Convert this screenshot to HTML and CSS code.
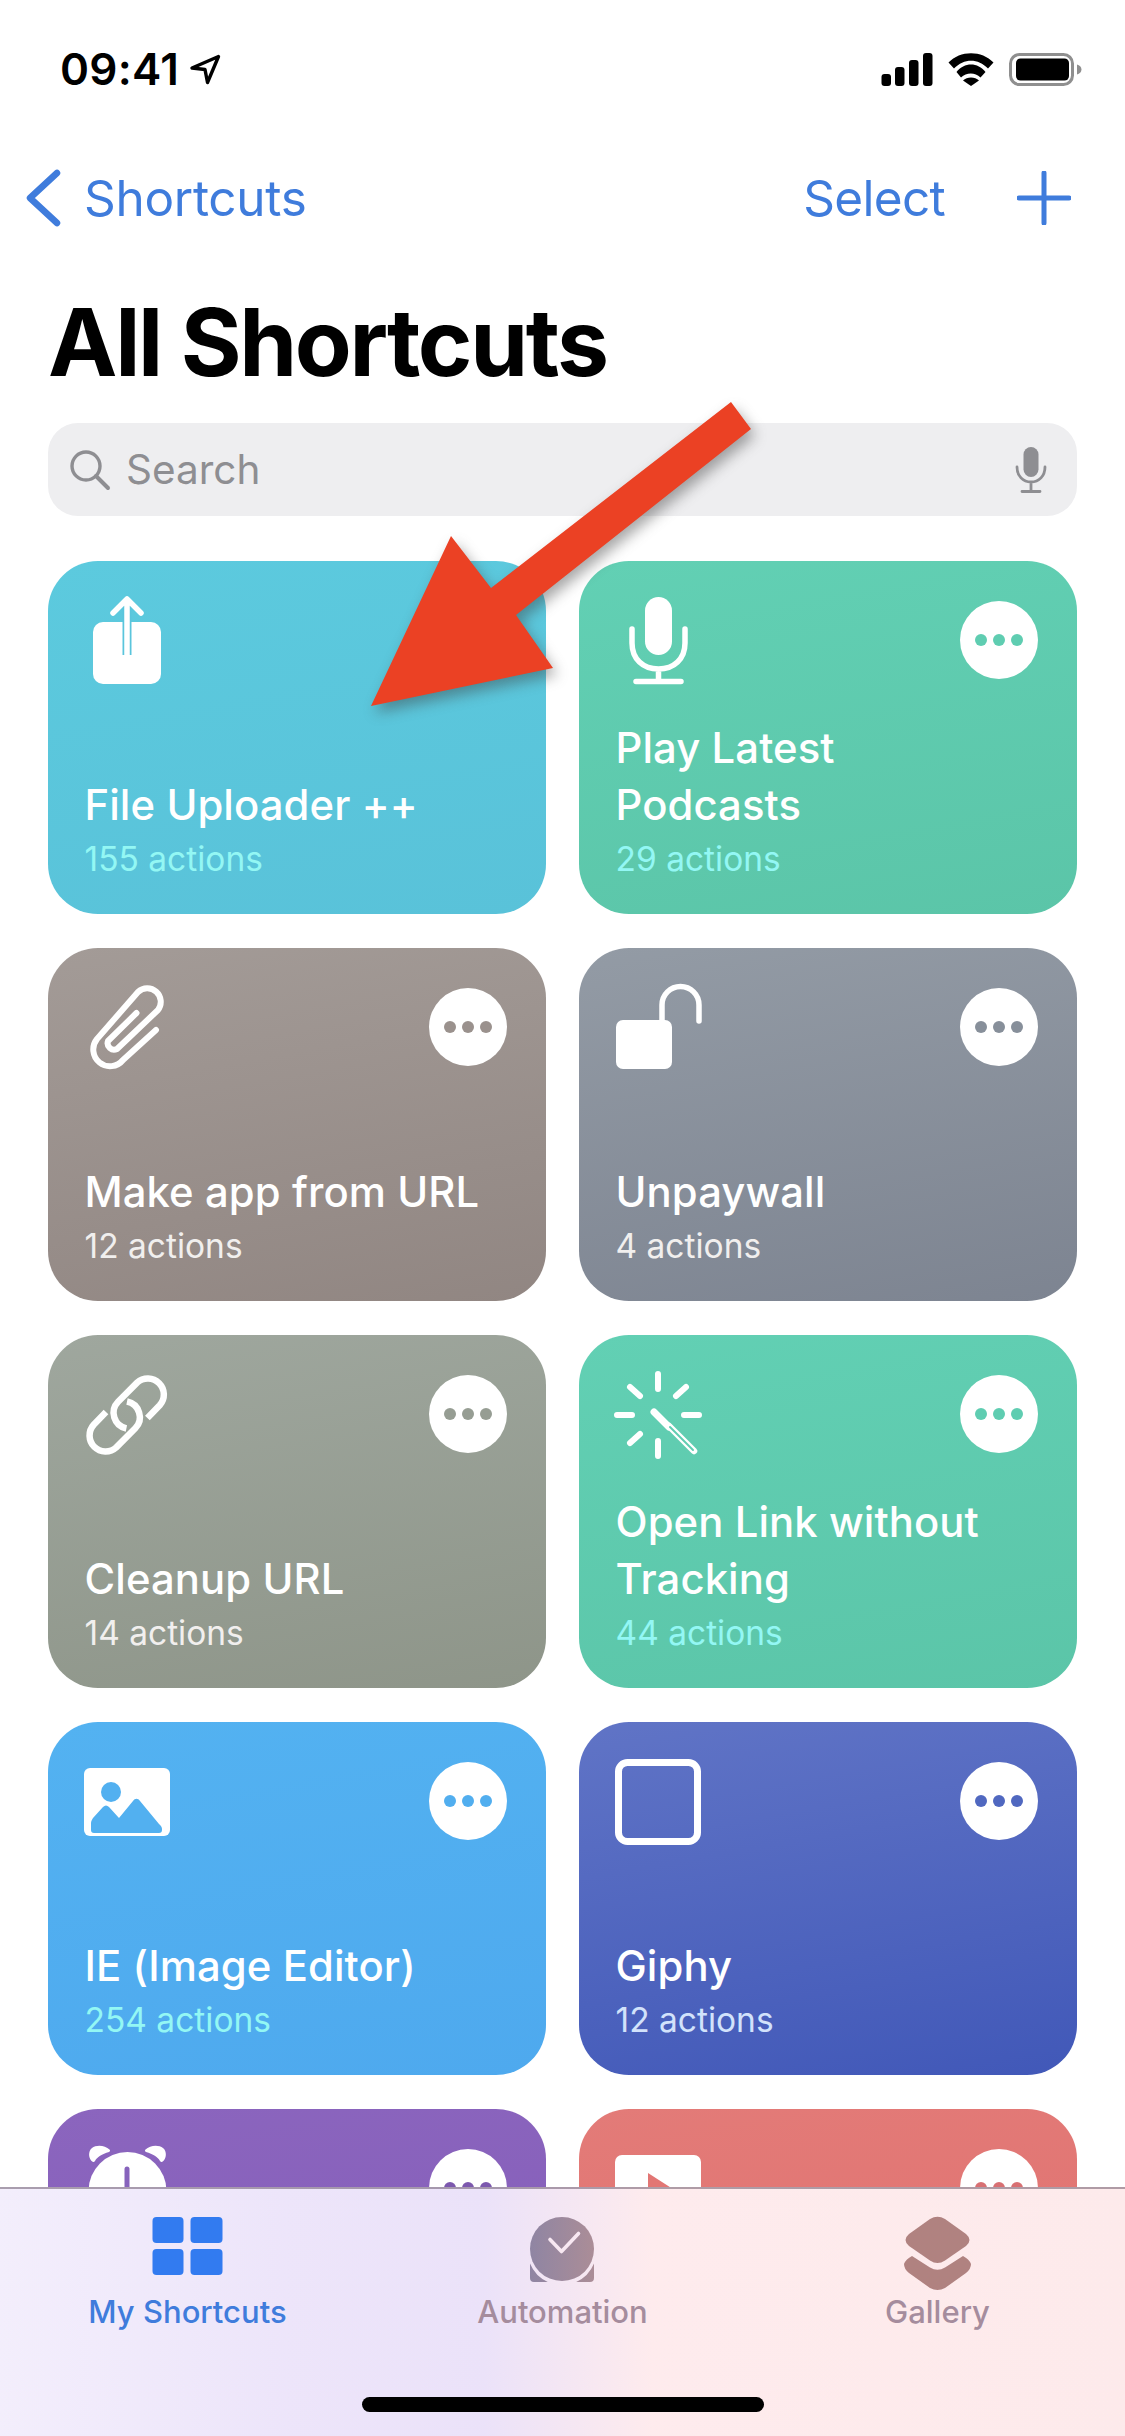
FILE: index.html
```html
<!DOCTYPE html>
<html lang="en">
<head>
<meta charset="utf-8">
<title>All Shortcuts</title>
<link rel="stylesheet" href="styles.css">
</head>
<body>
<div class="page">
  <div class="status">
    <div class="time-wrap">
      <span class="time">09:41</span>
      <svg class="loc" viewBox="0 0 32 32"><path d="M29.500 3.500 3 15l13 1.500 2.500 13z" fill="none" stroke="#000" stroke-width="3.400" stroke-linejoin="round"/></svg>
    </div>
    <div class="status-icons">
      <svg class="sig" viewBox="0 0 52 33"><rect x="0.500" y="21" width="9.500" height="12" rx="3"/><rect x="14" y="14" width="9.500" height="19" rx="3"/><rect x="28" y="7" width="9.500" height="26" rx="3"/><rect x="42" y="0" width="9.500" height="33" rx="3"/></svg>
      <svg class="wifi" viewBox="0 0 46 34"><path d="M.5 10.500C12-2 34-2 45.500 10.500L40 16.500C30 6 16 6 6 16.500z"/><path d="M8.500 20C16 10 30 10 37.500 20L32.500 25.500C27 20 18.500 20 13 25.500z"/><path d="M15 28.500C19 24.500 27 24.500 31 28.500L23 34z"/></svg>
      <svg class="batt" viewBox="0 0 73 33"><rect x="1.500" y="1.500" width="62" height="30" rx="9" fill="none" stroke="#8f8f8f" stroke-width="3"/><rect x="7" y="5.500" width="53" height="22" rx="4.500"/><path d="M68 11.500c2.500.8 4.500 2.500 4.500 5s-2 4.200-4.500 5z" fill="#8f8f8f"/></svg>
    </div>
  </div>

  <div class="nav">
    <div class="nav-back">
      <svg class="chev" viewBox="0 0 36 58"><path d="M31 4 4 29l27 25" fill="none" stroke="#3f7cdc" stroke-width="6.500" stroke-linecap="round" stroke-linejoin="round"/></svg>
      <span>Shortcuts</span>
    </div>
    <div class="nav-right">
      <span class="select">Select</span>
      <svg class="plus" viewBox="0 0 54 54"><path d="M27 2v50M2 27h50" fill="none" stroke="#3f7cdc" stroke-width="5" stroke-linecap="round"/></svg>
    </div>
  </div>

  <h1 class="title">All Shortcuts</h1>

  <div class="search">
    <svg class="search-ico" viewBox="0 0 42 42"><circle cx="17" cy="17" r="14" fill="none" stroke="#8e8e92" stroke-width="3.400"/><path d="M27 27l12 12" stroke="#8e8e92" stroke-width="4" stroke-linecap="round"/></svg>
    <span class="search-text">Search</span>
    <svg class="search-mic" viewBox="0 0 32 46"><rect x="8.500" y="0" width="15" height="30" rx="7.500" fill="#8e8e92"/><path d="M2 20c0 9 6 15 14 15s14-6 14-15M16 35v8M7 44.500h18" fill="none" stroke="#8e8e92" stroke-width="2.800" stroke-linecap="round"/></svg>
  </div>

  <div class="grid">
    <div class="card c-blue">
      <div class="card-top">
        <svg class="ico" viewBox="0 0 100 100"><rect x="8" y="31" width="68" height="62" rx="10" fill="#fff"/><path d="M42 64V10" stroke="#5ac5dc" stroke-width="9"/><path d="M42 64V10M28 22 42 8l14 14" fill="none" stroke="#fff" stroke-width="5.500" stroke-linecap="round" stroke-linejoin="round"/></svg>
      </div>
      <div class="name">File Uploader ++</div>
      <div class="sub cy">155 actions</div>
    </div>
    <div class="card c-green">
      <div class="card-top">
        <svg class="ico" viewBox="0 0 100 100"><rect x="29" y="6" width="27" height="58" rx="13.500" fill="#fff"/><path d="M16 38v14c0 16 11 26 26.500 26S69 68 69 52V38M42.500 78v12M20 90.500h45" fill="none" stroke="#fff" stroke-width="5.500" stroke-linecap="round"/></svg>
        <div class="more t-green"><i></i><i></i><i></i></div>
      </div>
      <div class="name">Play Latest<br>Podcasts</div>
      <div class="sub cy">29 actions</div>
    </div>
    <div class="card c-brown">
      <div class="card-top">
        <svg class="ico" viewBox="0 0 100 100"><path d="M71 52 38 82A15.500 15.500 0 0 1 12 61L53 14A13.500 13.500 0 0 1 73 32L32 71A6.500 6.500 0 0 1 23 63L51.500 35" fill="none" stroke="#fff" stroke-width="6" stroke-linecap="round" stroke-linejoin="round"/></svg>
        <div class="more t-brown"><i></i><i></i><i></i></div>
      </div>
      <div class="name">Make app from URL</div>
      <div class="sub">12 actions</div>
    </div>
    <div class="card c-slate">
      <div class="card-top">
        <svg class="ico" viewBox="0 0 100 100"><rect x="0" y="42" width="56" height="49" rx="7" fill="#fff"/><path d="M46 44V27a18 18 0 0 1 37 0v16" fill="none" stroke="#fff" stroke-width="5.500" stroke-linecap="round"/></svg>
        <div class="more t-slate"><i></i><i></i><i></i></div>
      </div>
      <div class="name">Unpaywall</div>
      <div class="sub">4 actions</div>
    </div>
    <div class="card c-sage">
      <div class="card-top">
        <svg class="ico" viewBox="0 0 100 100"><path d="M21 47 8.700 59.700A16 16 0 0 0 31.300 82.300L50.300 63.300A16 16 0 0 0 42 36.500M62.400 53 74.700 40.300A16 16 0 0 0 52.100 17.700L33.100 36.700A16 16 0 0 0 41.400 63.500" fill="none" stroke="#fff" stroke-width="6.500"/></svg>
        <div class="more t-sage"><i></i><i></i><i></i></div>
      </div>
      <div class="name">Cleanup URL</div>
      <div class="sub">14 actions</div>
    </div>
    <div class="card c-green">
      <div class="card-top">
        <svg class="ico" viewBox="0 0 100 100"><path d="M42 9v15M42 76v15M1 50h15M68 50h15M14 22l10 9M70 22l-10 9M14 78l10-9" fill="none" stroke="#fff" stroke-width="6" stroke-linecap="round"/><path d="M38 47 53 62" stroke="#fff" stroke-width="7" stroke-linecap="round"/><path d="M53 61 78 86" stroke="#fff" stroke-width="6.500" stroke-linecap="round"/><path d="M54 62 77 85" stroke="#5fcdb1" stroke-width="2" stroke-linecap="round"/></svg>
        <div class="more t-green"><i></i><i></i><i></i></div>
      </div>
      <div class="name">Open Link without<br>Tracking</div>
      <div class="sub cy">44 actions</div>
    </div>
    <div class="card c-sky">
      <div class="card-top">
        <svg class="ico" viewBox="0 0 100 100"><rect x="-1" y="16" width="86" height="68" rx="6" fill="#fff"/><circle cx="26" cy="40" r="10" fill="#52b0f0"/><path d="M6 71c0-2 1-3 2-5l10-11c2-2 4-2 6 0l10 11 14-17c2-3 5-3 7 0l19 23c2 2 3 3 3 5v1a3 3 0 0 1-3 3H9a3 3 0 0 1-3-3z" fill="#52b0f0"/></svg>
        <div class="more t-sky"><i></i><i></i><i></i></div>
      </div>
      <div class="name">IE (Image Editor)</div>
      <div class="sub cy">254 actions</div>
    </div>
    <div class="card c-indigo">
      <div class="card-top">
        <svg class="ico" viewBox="0 0 100 100"><rect x="2.500" y="10.500" width="79" height="79" rx="9" fill="none" stroke="#fff" stroke-width="7"/></svg>
        <div class="more t-indigo"><i></i><i></i><i></i></div>
      </div>
      <div class="name">Giphy</div>
      <div class="sub sub-pale">12 actions</div>
    </div>
    <div class="card c-purple">
      <div class="card-top">
        <svg class="ico" viewBox="0 0 100 100"><circle cx="42.500" cy="52" r="39" fill="#fff"/><path d="M8 23C3 20 3 12 7 9 11 5.500 20 6 24.500 10.500 25.500 11.500 25 12.500 24 13 17 15 12 18 10 22 9.500 23 8.500 23.300 8 23z" fill="#fff"/><path d="M77 23C82 20 82 12 78 9 74 5.500 65 6 60.500 10.500 59.500 11.500 60 12.500 61 13 68 15 73 18 75 22 75.500 23 76.500 23.300 77 23z" fill="#fff"/><path d="M42 30v32" stroke="#8763bc" stroke-width="5" stroke-linecap="round"/></svg>
        <div class="more t-purple"><i></i><i></i><i></i></div>
      </div>
    </div>
    <div class="card c-red">
      <div class="card-top">
        <svg class="ico" viewBox="0 0 100 100"><rect x="-1" y="16" width="86" height="70" rx="7" fill="#fff"/><path d="M32 34v36l28-18z" fill="#e27674"/></svg>
        <div class="more t-red"><i></i><i></i><i></i></div>
      </div>
    </div>
  </div>

  <svg class="arrow" viewBox="0 0 1125 800"><polygon points="731,402 751,429 516,615 553,668 371,706 451,536 491,588" fill="#eb4124"/></svg>

  <div class="tabbar">
    <div class="tab active">
      <svg class="tab-ico" viewBox="0 0 76 76"><g fill="#327bf0"><rect x="2.500" y="2" width="31" height="26" rx="4"/><rect x="40.500" y="2" width="32" height="26" rx="4"/><rect x="2.500" y="34" width="31" height="26" rx="4"/><rect x="40.500" y="34" width="32" height="26" rx="4"/></g></svg>
      <span>My Shortcuts</span>
    </div>
    <div class="tab">
      <svg class="tab-ico" viewBox="0 0 76 76"><defs><linearGradient id="ag" x1="0" x2="1" y1="0" y2="0"><stop offset="0" stop-color="#8f85a3"/><stop offset="1" stop-color="#ab8d97"/></linearGradient></defs><circle cx="37" cy="34" r="32" fill="url(#ag)"/><path d="M5 48.500A35 35 0 0 0 22.800 67H9a4 4 0 0 1-4-4zM69 48.500A35 35 0 0 1 51.200 67H65a4 4 0 0 0 4-4z" fill="url(#ag)"/><path d="M25 24.500l11.500 12L53.500 18.500" fill="none" stroke="#f8e8f2" stroke-width="3.600" stroke-linecap="round" stroke-linejoin="round"/></svg>
      <span>Automation</span>
    </div>
    <div class="tab">
      <svg class="tab-ico" viewBox="0 0 76 76"><g fill="#b08280"><path d="M30 4Q37.500-.5 45 4L66 19Q73 25 66 31L45 45.500Q37.500 50.500 30 45.500L9 31Q2 25 9 19z"/><path d="M12 41 30 52.500Q37.500 57 45 52.500L63 41Q69 44 71 49 71 54 66 58L45 73Q37.500 77 30 73L9 58Q4 54 4 49 6 44 12 41z"/></g></svg>
      <span>Gallery</span>
    </div>
    <div class="home-bar"></div>
  </div>
</div>
</body>
</html>
```

FILE: styles.css
```css
* { box-sizing: border-box; }
html, body { margin: 0; padding: 0; background: #fff; }
.page {
  position: relative;
  width: 1125px;
  height: 2436px;
  overflow: hidden;
  background: #fff;
  font-family: Inter, "Liberation Sans", sans-serif;
  color: #000;
}
.status {
  height: 163px;
  padding: 46px 43px 0 60px;
  display: flex;
  justify-content: space-between;
  align-items: flex-start;
}
.time-wrap { display: flex; align-items: center; gap: 10px; height: 46px; }
.time { font-size: 44px; font-weight: 600; letter-spacing: 0.3px; line-height: 46px; }
.loc { width: 32px; height: 32px; }
.status-icons { display: flex; align-items: center; gap: 15px; height: 46px; }
.sig { width: 52px; height: 33px; }
.wifi { width: 46px; height: 34px; }
.batt { width: 73px; height: 33px; }

.nav {
  height: 70px;
  padding: 0 54px 0 26px;
  display: flex;
  justify-content: space-between;
  align-items: center;
  color: #3f7cdc;
  font-size: 49.500px;
  letter-spacing: -0.3px;
}
.nav-back { display: flex; align-items: center; gap: 22px; }
.chev { width: 36px; height: 58px; }
.nav-right { display: flex; align-items: center; gap: 72px; }
.select { letter-spacing: -0.7px; }
.plus { width: 54px; height: 54px; }

.title {
  margin: 54px 0 0;
  padding-left: 48px;
  height: 110px;
  font-size: 93px;
  line-height: 110px;
  font-weight: 700;
  letter-spacing: -2.300px;
}
.search {
  margin: 26px 48px 0;
  height: 93px;
  border-radius: 30px;
  background: #eeeef0;
  display: flex;
  align-items: center;
  padding: 0 30px 0 21px;
  color: #8e8e92;
  font-size: 40.500px;
}
.search-ico { width: 42px; height: 42px; margin-right: 15px; }
.search-text { flex: 1; }
.search-mic { width: 32px; height: 46px; }

.grid {
  margin: 45px 48px 0;
  display: grid;
  grid-template-columns: 498px 498px;
  grid-auto-rows: 353px;
  column-gap: 33px;
  row-gap: 34px;
}
.card {
  border-radius: 50px;
  padding: 30px 39px 30px 36.500px;
  display: flex;
  flex-direction: column;
  color: #fff;
}
.card-top { flex: 1; display: flex; justify-content: space-between; align-items: flex-start; }
.ico { width: 100px; height: 100px; overflow: visible; }
.more {
  width: 78px;
  height: 78px;
  margin-top: 10px;
  border-radius: 50%;
  background: #fff;
  display: flex;
  align-items: center;
  justify-content: center;
  gap: 6px;
}
.more i { width: 12px; height: 12px; border-radius: 50%; background: currentColor; }
.name { font-size: 41.800px; line-height: 57px; font-weight: 500; letter-spacing: 0.1px; }
.sub { font-size: 33.500px; line-height: 50px; color: #f1efee; }
.cy { color: #93f7f4; }
.sub-pale { color: #d2e2fb; }

.c-blue { background: linear-gradient(170deg, #5ccade, #59c2d9); }
.c-green { background: linear-gradient(170deg, #62d0b4, #5bc5a8); }
.c-brown { background: linear-gradient(170deg, #a39b97, #918682); }
.c-slate { background: linear-gradient(170deg, #939ba5, #7d8491); }
.c-sage { background: linear-gradient(170deg, #9fa79e, #8e9589); }
.c-sky { background: linear-gradient(170deg, #53b2f1, #4ea9ee); }
.c-indigo { background: linear-gradient(170deg, #6074c6, #4158b8); }
.c-purple { background: linear-gradient(170deg, #8b65be, #835cb8); }
.c-red { background: linear-gradient(170deg, #e37b78, #df6f6e); }
.t-green { color: #5fcdb1; }
.t-brown { color: #9a918d; }
.t-slate { color: #878f9a; }
.t-sage { color: #969d93; }
.t-sky { color: #51aeef; }
.t-indigo { color: #5068c0; }
.t-purple { color: #7c58ae; }
.t-red { color: #d87073; }

.arrow {
  position: absolute;
  left: 0;
  top: 0;
  width: 1125px;
  height: 800px;
  filter: drop-shadow(4px 7px 7px rgba(60, 60, 60, 0.45));
}

.tabbar {
  position: absolute;
  left: 0;
  right: 0;
  bottom: 0;
  height: 249px;
  border-top: 2px solid rgba(80, 60, 80, 0.45);
  background: linear-gradient(90deg, #f3eefc 0%, #ede5fa 25%, #ebe2f9 43%, #feebed 58%, #fdeaeb 100%);
  display: flex;
  align-items: flex-start;
  padding-top: 26px;
}
.tab {
  flex: 1;
  display: flex;
  flex-direction: column;
  align-items: center;
  color: #a58c9d;
  font-size: 31px;
  font-weight: 500;
  line-height: 40px;
}
.tab.active { color: #3f7cdc; }
.tab-ico { width: 76px; height: 76px; margin-bottom: 1px; }
.home-bar {
  position: absolute;
  left: 362px;
  bottom: 24px;
  width: 402px;
  height: 15px;
  border-radius: 8px;
  background: #000;
}
```
